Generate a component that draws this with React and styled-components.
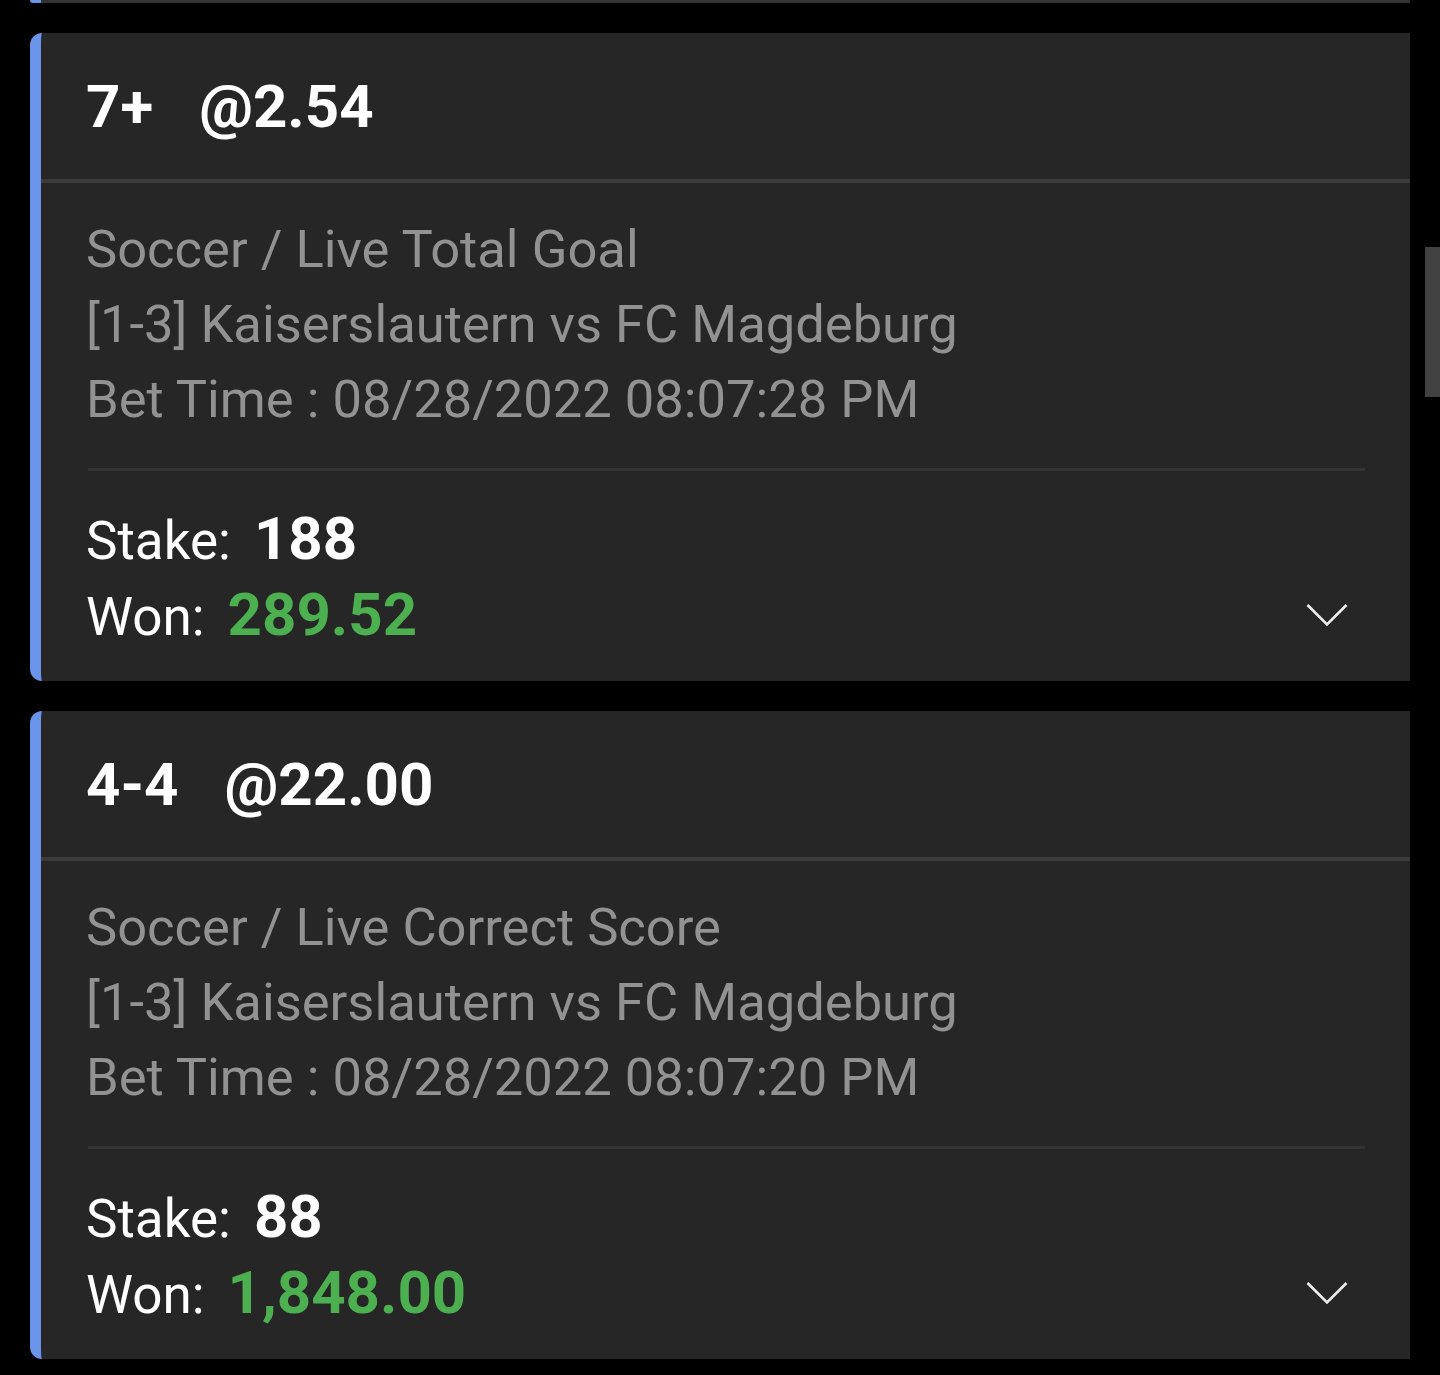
import React from "react";
import styled, { createGlobalStyle } from "styled-components";

const Global = createGlobalStyle`
  html, body { margin: 0; padding: 0; background: #000; }
  body { font-family: Roboto, "Noto Sans", Arial, sans-serif; }
`;

const Page = styled.div`
  position: relative;
  min-height: 1375px;
  background: #000;
  padding: 0 30px;
  box-sizing: border-box;
  display: flex;
  flex-direction: column;
  gap: 30px;
`;

const CardTail = styled.div`
  height: 3px;
  width: 1380px;
  box-sizing: border-box;
  background: #333;
  border-left: 11px solid #6a93ea;
  border-bottom-left-radius: 12px;
`;

const Card = styled.section`
  width: 1380px;
  box-sizing: border-box;
  background: #262626;
  border-left: 11px solid #6a93ea;
  border-radius: 12px 0 0 12px;
  display: flex;
  flex-direction: column;
`;

const Header = styled.header`
  height: 146px;
  display: flex;
  align-items: center;
  padding-left: 45px;
  gap: 46px;
  color: #fff;
  font-size: 60px;
  font-weight: 700;
  border-bottom: 4px solid #3b3b3b;
`;

const Body = styled.div`
  padding: 29px 45px 28px 45px;
  display: flex;
  flex-direction: column;
`;

const InfoLine = styled.div`
  font-size: 52.5px;
  line-height: 75px;
  color: #929292;
  white-space: nowrap;
`;

const Divider = styled.hr`
  border: none;
  height: 3px;
  background: #333;
  margin: 31px 0 30px 2px;
`;

const Row = styled.div`
  height: 76px;
  display: flex;
  align-items: baseline;
  gap: 23px;
  line-height: 76px;
`;

const Label = styled.span`
  color: #fff;
  font-size: 53px;
`;

const Value = styled.span`
  color: ${(p) => (p.$won ? "#4caf50" : "#fff")};
  font-size: 60px;
  font-weight: 700;
`;

const Chevron = styled.svg`
  margin-left: auto;
  margin-right: 17px;
  align-self: center;
  width: 42px;
  height: 24px;
`;

const Scrollbar = styled.div`
  position: absolute;
  right: 0;
  top: 247px;
  width: 15px;
  height: 150px;
  background: #414141;
`;

const bets = [
  {
    pick: "7+",
    odds: "@2.54",
    market: "Soccer / Live Total Goal",
    match: "[1-3] Kaiserslautern vs FC Magdeburg",
    time: "Bet Time : 08/28/2022 08:07:28 PM",
    stake: "188",
    won: "289.52",
  },
  {
    pick: "4-4",
    odds: "@22.00",
    market: "Soccer / Live Correct Score",
    match: "[1-3] Kaiserslautern vs FC Magdeburg",
    time: "Bet Time : 08/28/2022 08:07:20 PM",
    stake: "88",
    won: "1,848.00",
  },
];

function BetCard({ bet }) {
  return (
    <Card>
      <Header>
        <span>{bet.pick}</span>
        <span>{bet.odds}</span>
      </Header>
      <Body>
        <InfoLine>{bet.market}</InfoLine>
        <InfoLine>{bet.match}</InfoLine>
        <InfoLine>{bet.time}</InfoLine>
        <Divider />
        <Row>
          <Label>Stake:</Label>
          <Value>{bet.stake}</Value>
        </Row>
        <Row>
          <Label>Won:</Label>
          <Value $won>{bet.won}</Value>
          <Chevron viewBox="0 0 42 24" fill="none">
            <path d="M1.5 2 L21 21.5 L40.5 2" stroke="#ececec" strokeWidth="2.6" />
          </Chevron>
        </Row>
      </Body>
    </Card>
  );
}

export default function App() {
  return (
    <>
      <Global />
      <Page>
        <CardTail />
        {bets.map((b, i) => (
          <BetCard key={i} bet={b} />
        ))}
        <Scrollbar />
      </Page>
    </>
  );
}
